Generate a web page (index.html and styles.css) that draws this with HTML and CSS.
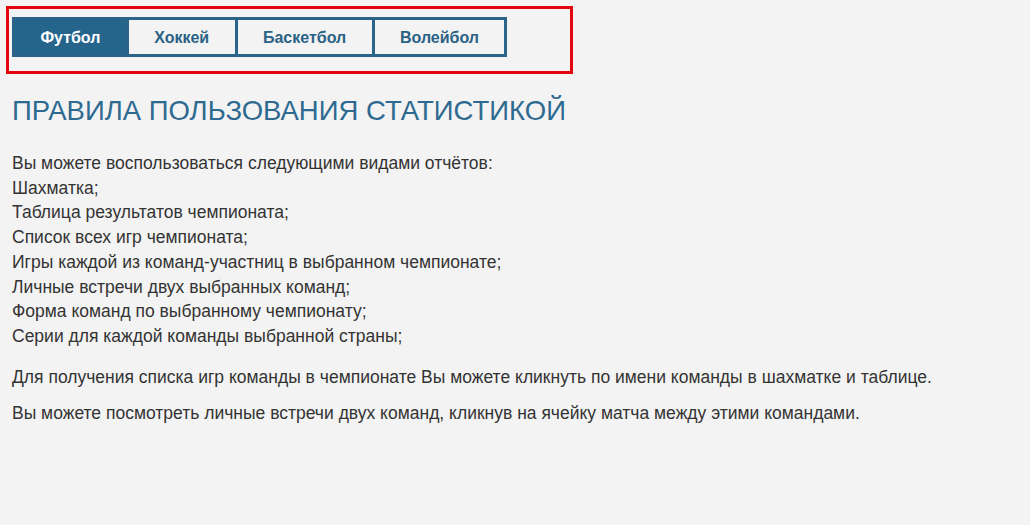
FILE: index.html
```html
<!DOCTYPE html>
<html lang="ru">
<head>
<meta charset="utf-8">
<title>Правила пользования статистикой</title>
<link rel="stylesheet" href="styles.css">
</head>
<body>
<div class="frame">
  <nav class="tabs">
    <a class="tab active" href="#">Футбол</a>
    <a class="tab" href="#">Хоккей</a>
    <a class="tab" href="#">Баскетбол</a>
    <a class="tab" href="#">Волейбол</a>
  </nav>
</div>
<h1 class="title">ПРАВИЛА ПОЛЬЗОВАНИЯ СТАТИСТИКОЙ</h1>
<div class="content">
  <p class="lead">Вы можете воспользоваться следующими видами отчётов:</p>
  <ul class="reports">
    <li>Шахматка;</li>
    <li>Таблица результатов чемпионата;</li>
    <li>Список всех игр чемпионата;</li>
    <li>Игры каждой из команд-участниц в выбранном чемпионате;</li>
    <li>Личные встречи двух выбранных команд;</li>
    <li>Форма команд по выбранному чемпионату;</li>
    <li>Серии для каждой команды выбранной страны;</li>
  </ul>
  <p class="note">Для получения списка игр команды в чемпионате Вы можете кликнуть по имени команды в шахматке и таблице.</p>
  <p class="note">Вы можете посмотреть личные встречи двух команд, кликнув на ячейку матча между этими командами.</p>
</div>
</body>
</html>
```
FILE: styles.css
```css
html, body {
  margin: 0;
  background: #f3f3f3;
}
body {
  padding: 6px 12px;
  font-family: "Liberation Sans", Arial, sans-serif;
  color: #333333;
}
.frame {
  box-sizing: border-box;
  width: 567px;
  height: 68px;
  margin-left: -6px;
  border: 3px solid #e4060f;
  padding: 8px 3px 0 3px;
}
.tabs {
  display: inline-flex;
  border: 3px solid #2a6488;
  height: 40px;
  box-sizing: border-box;
}
.tab {
  display: flex;
  align-items: center;
  justify-content: center;
  padding: 1px 25.4px 0;
  font-size: 16px;
  font-weight: bold;
  color: #2a6285;
  text-decoration: none;
  border-left: 3px solid #2a6488;
  background: #f3f3f3;
}
.tab:first-child {
  border-left: 0;
}
.tab.active {
  background: #25658c;
  color: #ffffff;
}
.title {
  margin: 21px 0 0 0;
  font-size: 27.5px;
  font-weight: normal;
  color: #2e6a90;
  line-height: 31px;
}
.content {
  margin-top: 25px;
  font-size: 17.5px;
  line-height: 24.7px;
}
.lead {
  margin: 0;
}
.reports {
  list-style: none;
  margin: 0 0 16px 0;
  padding: 0;
}
.note {
  margin: 0 0 12px 0;
}
```
